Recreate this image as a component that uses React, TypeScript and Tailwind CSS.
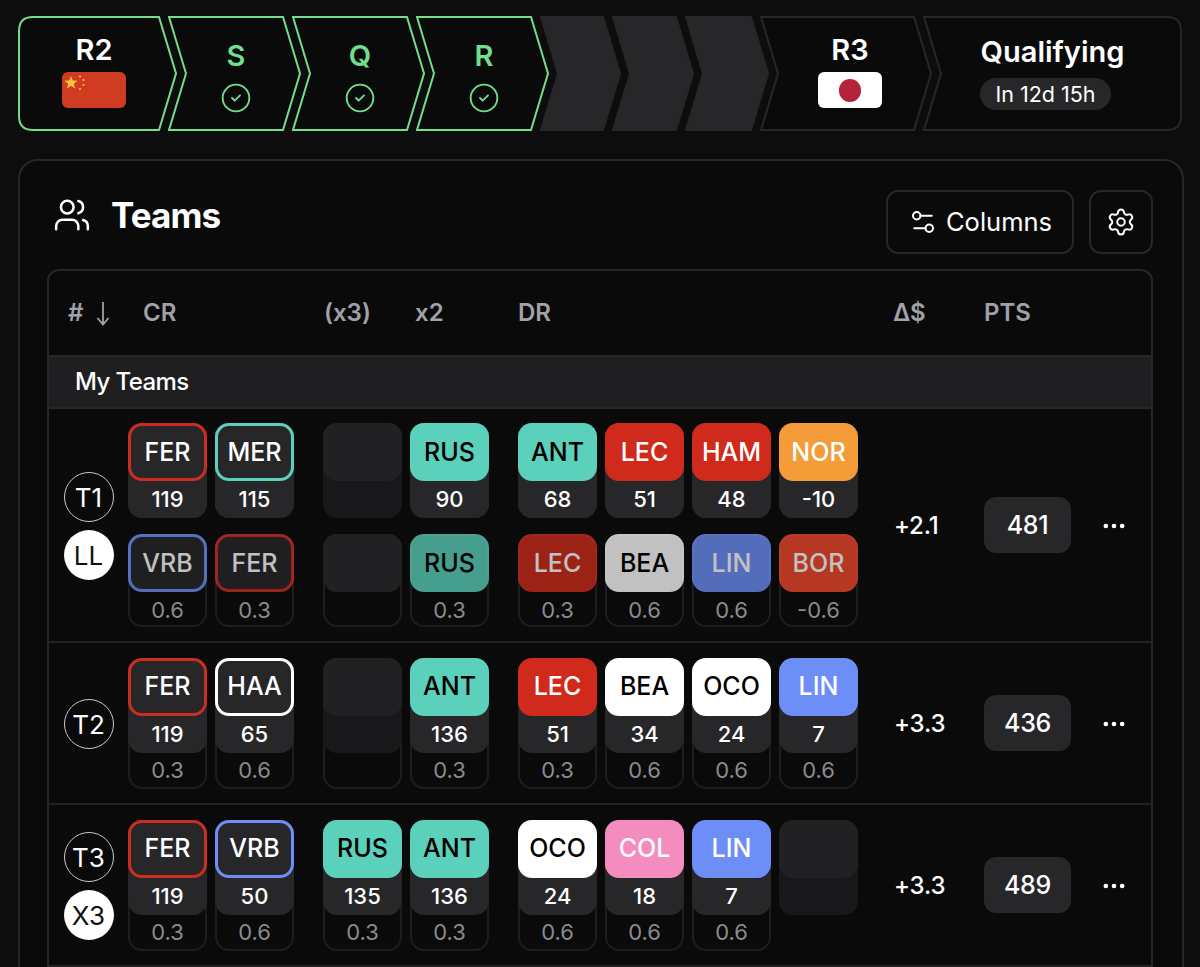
import { CircleCheck, Ellipsis, Settings, Settings2, Users } from "lucide-react";

type ChipData = {
  code?: string;
  head?: string;
  value?: string;
  sub?: string;
};

const fer = "bg-[#27272a] border-[3px] border-[#cb2d20] text-white";
const mer = "bg-[#27272a] border-[3px] border-[#5bd0bb] text-white";
const vrb = "bg-[#27272a] border-[3px] border-[#6d8ef7] text-white";
const haa = "bg-[#27272a] border-[3px] border-white text-white";
const teal = "bg-[#5bd0bb] text-black";
const red = "bg-[#cf2a1b] text-white";
const orange = "bg-[#f49c37] text-white";
const white = "bg-white text-black";
const blue = "bg-[#6d8ef7] text-white";
const pink = "bg-[#f48cc0] text-white";
const rust = "bg-[#f0462a] text-white";

function Chip({ chip, dim }: { chip: ChipData; dim?: boolean }) {
  const empty = !chip.code;
  const hasBoth = chip.value && chip.sub;
  const onlySub = !chip.value && chip.sub;
  const height = hasBoth || (empty && chip.sub === "") ? "h-[131px]" : onlySub || dim ? "h-[93px]" : "h-[95px]";
  const framed = hasBoth || dim || (empty && chip.sub === "");

  return (
    <div
      className={`w-[79px] shrink-0 rounded-[14px] ${height} ${
        framed ? "shadow-[inset_0_0_0_2px_#1d1d20]" : empty ? "bg-[#18181a]" : "bg-[#27272a]"
      }`}
    >
      {(chip.value || (empty && chip.sub === "")) && (
        <div className={`h-[95px] rounded-[14px] ${empty ? "bg-[#18181a]" : "bg-[#27272a]"}`}>
          <Head chip={chip} empty={empty} dim={dim} />
          {chip.value && (
            <div className="flex h-[37px] items-center justify-center text-[22px] font-medium text-white">{chip.value}</div>
          )}
        </div>
      )}
      {!chip.value && !(empty && chip.sub === "") && <Head chip={chip} empty={empty} dim={dim} />}
      {chip.sub && (
        <div className="flex h-[35px] items-center justify-center pt-px text-[22px] text-[#8b8b8f]">{chip.sub}</div>
      )}
    </div>
  );
}

function Head({ chip, empty, dim }: { chip: ChipData; empty: boolean; dim?: boolean }) {
  return (
    <div
      className={`flex h-[58px] items-center justify-center rounded-[14px] pt-px text-[25px] font-medium ${
        empty ? "bg-[#212124]" : chip.head
      } ${dim && !empty ? "opacity-75" : ""}`}
    >
      {chip.code}
    </div>
  );
}

function ChipRow({ cr, boost, dr, dim }: { cr: ChipData[]; boost: ChipData[]; dr: ChipData[]; dim?: boolean }) {
  return (
    <div className="flex">
      <div className="flex w-[195px] gap-2">
        {cr.map((c, i) => (
          <Chip key={i} chip={c} dim={dim} />
        ))}
      </div>
      <div className="flex w-[195px] gap-2">
        {boost.map((c, i) => (
          <Chip key={i} chip={c} dim={dim} />
        ))}
      </div>
      <div className="flex w-[376px] gap-2">
        {dr.map((c, i) => (
          <Chip key={i} chip={c} dim={dim} />
        ))}
      </div>
    </div>
  );
}

function TeamBadges({ name, tag }: { name: string; tag?: string }) {
  return (
    <div className="flex w-[79px] shrink-0 flex-col items-center justify-center gap-2 pt-[2px]">
      <div className="flex size-[50px] items-center justify-center rounded-full border-[1.5px] border-[#c9c9c9] text-[26px] text-white">
        {name}
      </div>
      {tag && (
        <div className="flex size-[50px] items-center justify-center rounded-full bg-white text-[26px] text-[#111]">
          {tag}
        </div>
      )}
    </div>
  );
}

function TeamRow({
  name,
  tag,
  delta,
  pts,
  children,
  rowClass,
}: {
  name: string;
  tag?: string;
  delta: string;
  pts: string;
  children: React.ReactNode;
  rowClass: string;
}) {
  return (
    <div className={`flex border-b-2 border-[#222225] ${rowClass}`}>
      <TeamBadges name={name} tag={tag} />
      <div className="flex flex-col justify-center gap-4">{children}</div>
      <div className="flex w-[90px] items-center pt-[2px] text-[24px] font-medium tracking-[-0.2px] text-white">{delta}</div>
      <div className="flex items-center">
        <div className="flex h-[56px] w-[87px] items-center justify-center rounded-xl bg-[#27272a] pt-[2px] text-[25px] font-medium tracking-[-0.3px] text-white">
          {pts}
        </div>
      </div>
      <div className="flex flex-1 items-center justify-center pl-[6px] pt-[2px] text-white">
        <Ellipsis size={28} strokeWidth={2} />
      </div>
    </div>
  );
}

function ChinaFlag() {
  return (
    <svg width="64" height="36" viewBox="0 0 64 36" className="rounded-[6px]">
      <rect width="64" height="36" fill="#d03c21" />
      <polygon points="9,4 10.8,8.6 15.6,8.8 11.8,11.8 13.1,16.4 9,13.8 4.9,16.4 6.2,11.8 2.4,8.8 7.2,8.6" fill="#f8c53a" />
      <circle cx="18" cy="4.5" r="1.1" fill="#f8c53a" />
      <circle cx="21.5" cy="8" r="1.1" fill="#f8c53a" />
      <circle cx="21.5" cy="13" r="1.1" fill="#f8c53a" />
      <circle cx="18" cy="17" r="1.1" fill="#f8c53a" />
    </svg>
  );
}

function JapanFlag() {
  return (
    <div className="flex h-[36px] w-[64px] items-center justify-center rounded-[6px] bg-white">
      <div className="h-[23px] w-[22px] rounded-full bg-[#b4233a]" />
    </div>
  );
}

// one arrow of the stepper, drawn to its own pixel size
function Chevron({
  w,
  first,
  last,
  stroke,
  fill,
}: {
  w: number;
  first?: boolean;
  last?: boolean;
  stroke: string;
  fill: string;
}) {
  const h = 115;
  const top = 1;
  const bot = h - 1;
  const mid = h / 2;
  const d = 17;
  const left = first
    ? `M 15 ${top} Q 1 ${top} 1 15 L 1 ${bot - 14} Q 1 ${bot} 15 ${bot}`
    : `M 1 ${top} L ${d + 1} ${mid} L 1 ${bot}`;
  const right = last
    ? `L ${w - 15} ${bot} Q ${w - 1} ${bot} ${w - 1} ${bot - 14} L ${w - 1} 15 Q ${w - 1} ${top} ${w - 15} ${top} Z`
    : `L ${w - d - 1} ${bot} L ${w - 1} ${mid} L ${w - d - 1} ${top} Z`;
  return (
    <svg width={w} height={h} viewBox={`0 0 ${w} ${h}`} className="absolute inset-0">
      <path d={`${left} ${right}`} fill={fill} stroke={stroke} strokeWidth={2} strokeLinejoin="miter" />
    </svg>
  );
}

function Step({
  w,
  first,
  last,
  stroke = "#71dd8d",
  fill = "#0a0a0a",
  className = "",
  children,
}: {
  w: number;
  first?: boolean;
  last?: boolean;
  stroke?: string;
  fill?: string;
  className?: string;
  children?: React.ReactNode;
}) {
  return (
    <div className={`relative h-[115px] shrink-0 ${first ? "" : "-ml-[9px]"}`} style={{ width: w }}>
      <Chevron w={w} first={first} last={last} stroke={stroke} fill={fill} />
      <div className={`relative flex h-full flex-col items-center ${className}`}>{children}</div>
    </div>
  );
}

function SessionStep({ label }: { label: string }) {
  return (
    <Step w={133} className="pl-[3px] pt-[20px]">
      <div className="text-[29px] leading-[40px] font-semibold text-[#71dd8d]">{label}</div>
      <CircleCheck size={32} strokeWidth={1.4} className="mt-[6px] text-[#71dd8d]" />
    </Step>
  );
}

const emptyTop: ChipData = {};
const emptyLow: ChipData = {};
const emptyBoth: ChipData = { sub: "" };

export default function App() {
  return (
    <div className="h-screen overflow-hidden bg-[#0d0d0d] px-[18px] pt-[16px] font-[Inter,sans-serif]">
      <div className="flex">
        <Step w={159} first className="pr-[7px] pt-[14px]">
          <div className="text-[29px] leading-[40px] font-semibold text-white">R2</div>
          <div className="mt-[2px] h-[36px]">
            <ChinaFlag />
          </div>
        </Step>
        <SessionStep label="S" />
        <SessionStep label="Q" />
        <SessionStep label="R" />
        <Step w={81} stroke="#27272a" fill="#27272a" />
        <Step w={82} stroke="#27272a" fill="#27272a" />
        <Step w={84} stroke="#27272a" fill="#27272a" />
        <Step w={172} stroke="#27272a" className="pl-[8px] pt-[14px]">
          <div className="text-[29px] leading-[40px] font-semibold text-white">R3</div>
          <div className="mt-[2px]">
            <JapanFlag />
          </div>
        </Step>
        <Step w={259} last stroke="#27272a" className="pt-[16px]">
          <div className="text-[29px] leading-[40px] font-semibold text-white">Qualifying</div>
          <div className="mt-[6px] -translate-x-[7px] rounded-full bg-[#27272a] px-[15px] text-[21.5px] leading-[32px] text-white">
            In 12d 15h
          </div>
        </Step>
      </div>

      <div className="mt-[28px] h-[900px] w-[1166px] rounded-[20px] border-2 border-[#27272a] bg-[#0a0a0a] pl-[27px] pr-[29px] pt-[29px]">
        <div className="flex">
          <div className="flex h-[50px] flex-1 items-center">
            <Users size={38} strokeWidth={1.6} className="ml-[6px] text-white" />
            <div className="ml-[20px] text-[35px] font-bold tracking-[-0.9px] text-white">Teams</div>
          </div>
          <button className="flex h-[64px] w-[188px] items-center justify-center gap-[8px] rounded-xl border-2 border-[#27272a] text-[25.5px] text-white">
            <Settings2 size={30} strokeWidth={1.6} />
            Columns
          </button>
          <button className="ml-[15px] flex size-[64px] items-center justify-center rounded-xl border-2 border-[#27272a] text-white">
            <Settings size={30} strokeWidth={1.6} />
          </button>
        </div>

        <div className="mt-[15px] rounded-t-xl border-x-2 border-t-2 border-[#27272a]">
          <div className="flex h-[84px] items-center text-[24px] font-semibold text-[#a1a1aa]">
            <div className="flex w-[94px] items-center pl-[19px]">
              #
              <svg width="14" height="25" viewBox="0 0 14 25" className="ml-[13px]" fill="none" stroke="currentColor" strokeWidth="1.8">
                <path d="M7 1V23.5M1.5 17L7 23.5L12.5 17" />
              </svg>
            </div>
            <div className="w-[181px]">CR</div>
            <div className="w-[91px]">(x3)</div>
            <div className="w-[103px]">x2</div>
            <div className="w-[375px]">DR</div>
            <div className="w-[91px]">Δ$</div>
            <div>PTS</div>
          </div>
          <div className="flex h-[54px] items-center border-y-2 border-[#27272a] bg-[#1f1f22] pl-[26px] text-[24px] font-medium tracking-[-0.6px] text-white">
            My Teams
          </div>

          <TeamRow name="T1" tag="LL" delta="+2.1" pts="481" rowClass="h-[234px]">
            <ChipRow
              cr={[
                { code: "FER", head: fer, value: "119" },
                { code: "MER", head: mer, value: "115" },
              ]}
              boost={[emptyTop, { code: "RUS", head: teal, value: "90" }]}
              dr={[
                { code: "ANT", head: teal, value: "68" },
                { code: "LEC", head: red, value: "51" },
                { code: "HAM", head: red, value: "48" },
                { code: "NOR", head: orange, value: "-10" },
              ]}
            />
            <ChipRow
              dim
              cr={[
                { code: "VRB", head: vrb, sub: "0.6" },
                { code: "FER", head: fer, sub: "0.3" },
              ]}
              boost={[emptyLow, { code: "RUS", head: teal, sub: "0.3" }]}
              dr={[
                { code: "LEC", head: red, sub: "0.3" },
                { code: "BEA", head: white, sub: "0.6" },
                { code: "LIN", head: blue, sub: "0.6" },
                { code: "BOR", head: rust, sub: "-0.6" },
              ]}
            />
          </TeamRow>

          <TeamRow name="T2" delta="+3.3" pts="436" rowClass="h-[162px]">
            <ChipRow
              cr={[
                { code: "FER", head: fer, value: "119", sub: "0.3" },
                { code: "HAA", head: haa, value: "65", sub: "0.6" },
              ]}
              boost={[emptyBoth, { code: "ANT", head: teal, value: "136", sub: "0.3" }]}
              dr={[
                { code: "LEC", head: red, value: "51", sub: "0.3" },
                { code: "BEA", head: white, value: "34", sub: "0.6" },
                { code: "OCO", head: white, value: "24", sub: "0.6" },
                { code: "LIN", head: blue, value: "7", sub: "0.6" },
              ]}
            />
          </TeamRow>

          <TeamRow name="T3" tag="X3" delta="+3.3" pts="489" rowClass="h-[162px]">
            <ChipRow
              cr={[
                { code: "FER", head: fer, value: "119", sub: "0.3" },
                { code: "VRB", head: vrb, value: "50", sub: "0.6" },
              ]}
              boost={[
                { code: "RUS", head: teal, value: "135", sub: "0.3" },
                { code: "ANT", head: teal, value: "136", sub: "0.3" },
              ]}
              dr={[
                { code: "OCO", head: white, value: "24", sub: "0.6" },
                { code: "COL", head: pink, value: "18", sub: "0.6" },
                { code: "LIN", head: blue, value: "7", sub: "0.6" },
                emptyTop,
              ]}
            />
          </TeamRow>
        </div>
      </div>
    </div>
  );
}
